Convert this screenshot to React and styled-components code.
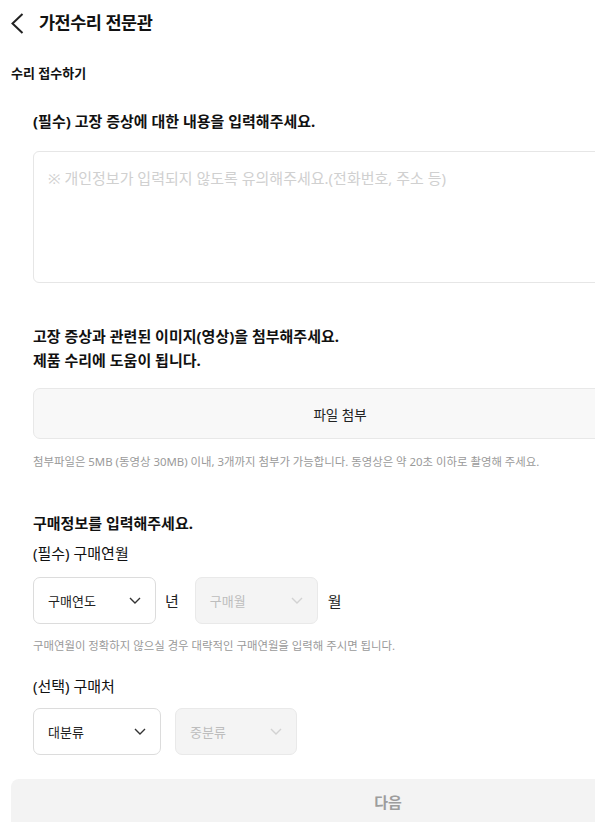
import styled, { createGlobalStyle } from "styled-components"

const GlobalStyle = createGlobalStyle`
  html, body {
    margin: 0;
    padding: 0;
    overflow: hidden;
    background: #fff;
  }
  * { box-sizing: border-box; }
  body {
    font-family: "Noto Sans", "Noto Sans CJK KR", sans-serif;
    color: #111;
  }
`

const Page = styled.div`
  width: 776px;
  padding: 0 11px;
`

const Header = styled.div`
  height: 42px;
  display: flex;
  align-items: center;
  margin-left: -1px;
`

const BackButton = styled.div`
  width: 29px;
  height: 22px;
  margin-top: 4px;
  display: flex;
  align-items: center;
  color: #222;
`

const HeaderTitle = styled.h1`
  margin: 0;
  font-size: 17.5px;
  font-weight: 700;
  letter-spacing: -0.5px;
`

const PageLabel = styled.div`
  margin-top: 21px;
  font-size: 13px;
  line-height: 20px;
  font-weight: 700;
`

const Form = styled.div`
  padding-left: 22px;
`

const Question = styled.h2`
  margin: ${p => p.mt || 0}px 0 0;
  font-size: 15px;
  line-height: ${p => p.lh || 22}px;
  font-weight: 700;
`

const SubLabel = styled.div`
  margin-top: ${p => p.mt || 0}px;
  font-size: 15px;
  line-height: 22px;
  font-weight: 400;
`

const TextArea = styled.div`
  margin-top: 19px;
  width: 614px;
  height: 132px;
  border: 1px solid #e6e6e6;
  border-radius: 6px;
  padding: 14px 14px;
  font-size: 15px;
  line-height: 24px;
  color: #d0d0d0;
`

const FileButton = styled.div`
  margin-top: 16px;
  width: 614px;
  height: 51px;
  background: #f8f8f8;
  border: 1px solid #e8e8e8;
  border-radius: 7px;
  display: flex;
  align-items: center;
  justify-content: center;
  font-size: 13.5px;
  color: #222;
`

const Note = styled.p`
  margin: ${p => p.mt || 0}px 0 0;
  font-size: 11.4px;
  line-height: 16px;
  color: #9a9a9a;
`

const SelectRow = styled.div`
  margin-top: ${p => p.mt || 0}px;
  display: flex;
  align-items: center;
  gap: ${p => p.gap || 0}px;
`

const Select = styled.div`
  width: ${p => p.w}px;
  height: 47px;
  border: 1px solid ${p => (p.disabled ? "#e9e9e9" : "#dcdcdc")};
  background: ${p => (p.disabled ? "#f4f4f4" : "#fff")};
  border-radius: 7px;
  display: flex;
  align-items: center;
  justify-content: space-between;
  padding: 0 14px;
  font-size: 13px;
  color: ${p => (p.disabled ? "#bdbdbd" : "#222")};
`

const Unit = styled.span`
  font-size: 15px;
  color: #222;
  margin: 0 ${p => p.mr || 0}px 0 ${p => p.ml || 0}px;
`

const NextButton = styled.div`
  margin-top: 24px;
  width: 754px;
  height: 60px;
  background: #f3f3f3;
  border-radius: 8px;
  display: flex;
  align-items: flex-start;
  justify-content: center;
  padding-top: 12px;
  font-size: 15px;
  font-weight: 700;
  color: #9d9d9d;
`

const Chevron = ({ color }) => (
  <svg width="12" height="7" viewBox="0 0 12 7" fill="none">
    <path d="M1 1l5 5 5-5" stroke={color} strokeWidth="1.4" />
  </svg>
)

const Dropdown = ({ w, disabled, children }) => (
  <Select w={w} disabled={disabled}>
    <span>{children}</span>
    <Chevron color={disabled ? "#d2d2d2" : "#333"} />
  </Select>
)

const App = () => {
  return (
    <Page>
      <GlobalStyle />
      <Header>
        <BackButton>
          <svg width="14" height="21" viewBox="0 0 14 21" fill="none">
            <path d="M12.5 1L2.5 10.5l10 9.5" stroke="#222" strokeWidth="2" />
          </svg>
        </BackButton>
        <HeaderTitle>가전수리 전문관</HeaderTitle>
      </Header>
      <PageLabel>수리 접수하기</PageLabel>
      <Form>
        <Question mt={27}>(필수) 고장 증상에 대한 내용을 입력해주세요.</Question>
        <TextArea>※ 개인정보가 입력되지 않도록 유의해주세요.(전화번호, 주소 등)</TextArea>

        <Question mt={41} lh={24}>
          고장 증상과 관련된 이미지(영상)을 첨부해주세요.
          <br />
          제품 수리에 도움이 됩니다.
        </Question>
        <FileButton>파일 첨부</FileButton>
        <Note mt={15}>
          첨부파일은 5MB (동영상 30MB) 이내, 3개까지 첨부가 가능합니다. 동영상은 약 20초 이하로 촬영해 주세요.
        </Note>

        <Question mt={42}>구매정보를 입력해주세요.</Question>
        <SubLabel mt={8}>(필수) 구매연월</SubLabel>
        <SelectRow mt={13}>
          <Dropdown w={123}>구매연도</Dropdown>
          <Unit ml={9} mr={16}>년</Unit>
          <Dropdown w={123} disabled>구매월</Dropdown>
          <Unit ml={10}>월</Unit>
        </SelectRow>
        <Note mt={14}>구매연월이 정확하지 않으실 경우 대략적인 구매연월을 입력해 주시면 됩니다.</Note>

        <SubLabel mt={21}>(선택) 구매처</SubLabel>
        <SelectRow mt={11} gap={14}>
          <Dropdown w={128}>대분류</Dropdown>
          <Dropdown w={122} disabled>중분류</Dropdown>
        </SelectRow>
      </Form>
      <NextButton>다음</NextButton>
    </Page>
  )
}

export default App
